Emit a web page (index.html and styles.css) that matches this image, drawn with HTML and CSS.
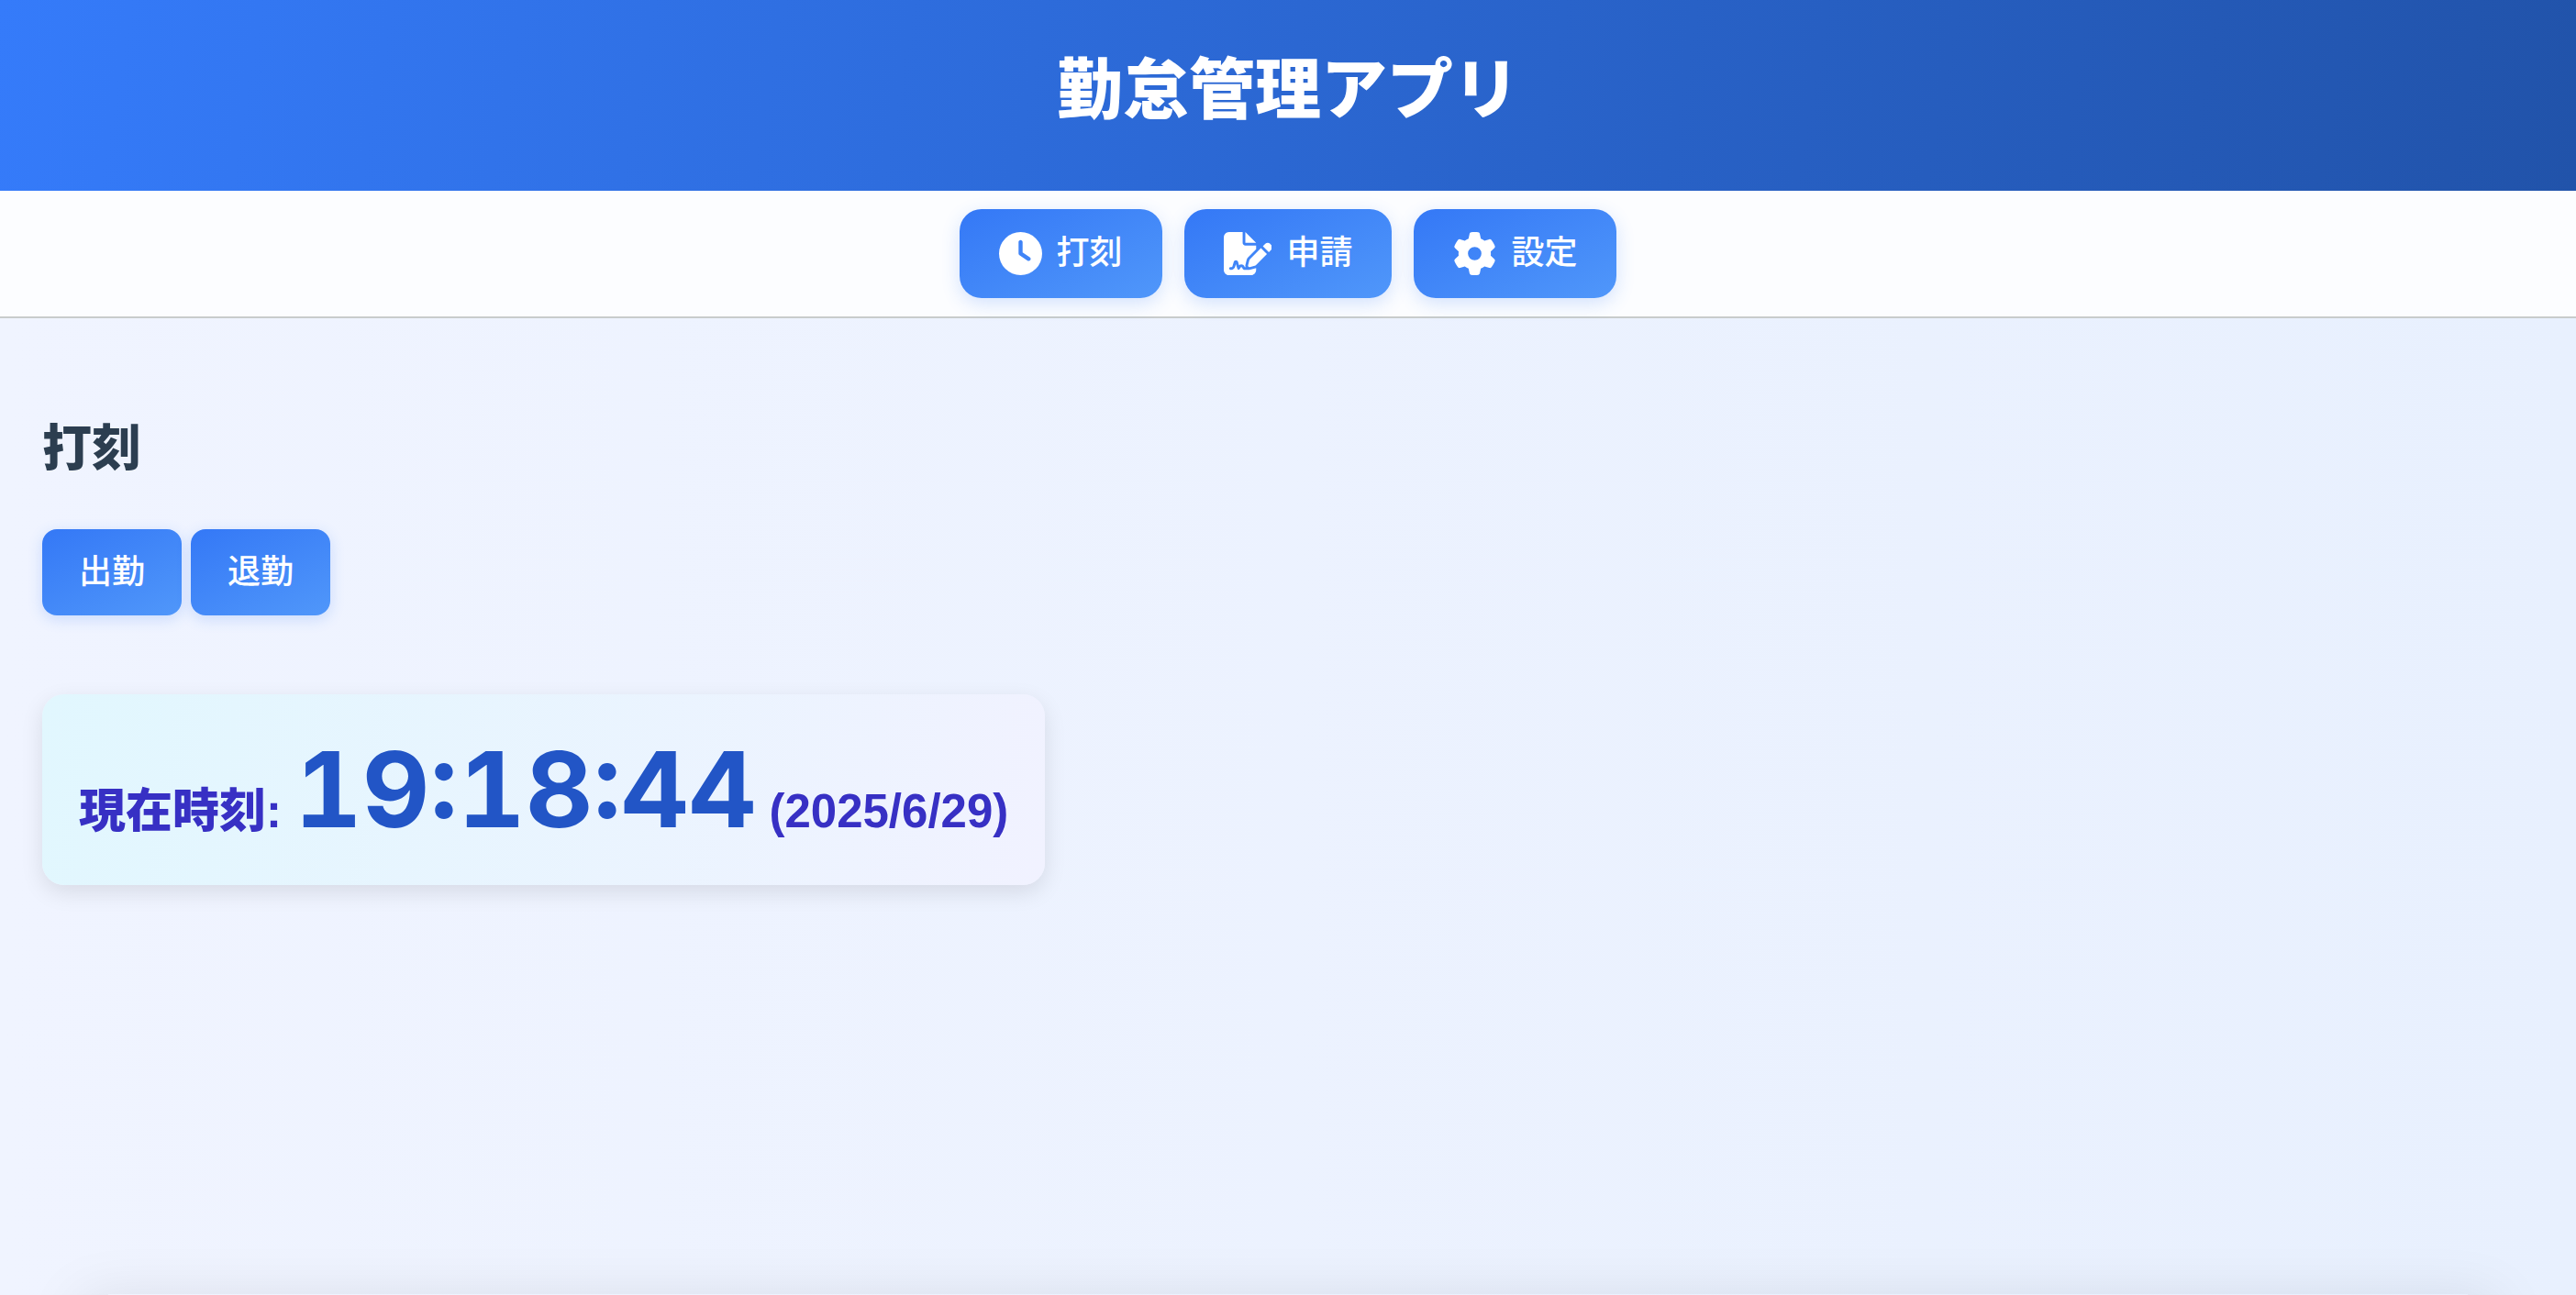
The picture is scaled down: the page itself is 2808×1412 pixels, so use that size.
FILE: index.html
```html
<!DOCTYPE html>
<html lang="ja">
<head>
<meta charset="utf-8">
<meta name="viewport" content="width=device-width, initial-scale=1">
<title>勤怠管理アプリ</title>
<link rel="stylesheet" href="styles.css">
</head>
<body>
<header class="app-header">
  <h1 class="app-title">勤怠管理アプリ</h1>
</header>
<nav class="app-nav">
  <button class="nav-button" type="button">
    <svg class="nav-icon" viewBox="0 0 512 512" aria-hidden="true"><path d="M256 0a256 256 0 1 1 0 512A256 256 0 1 1 256 0zM232 120V256c0 8 4 15.500 10.700 20l96 64c11 7.400 25.900 4.400 33.300-6.700s4.400-25.900-6.700-33.300L280 243.200V120c0-13.300-10.700-24-24-24s-24 10.700-24 24z"/></svg>
    <span>打刻</span>
  </button>
  <button class="nav-button" type="button">
    <svg class="nav-icon" viewBox="0 0 576 512" aria-hidden="true"><path d="M64 0C28.700 0 0 28.700 0 64V448c0 35.300 28.700 64 64 64H320c35.300 0 64-28.700 64-64V428.700c-2.700 1.100-5.400 2-8.200 2.700l-60.100 15c-3 .7-6 1.200-9 1.400c-.9 .1-1.800 .2-2.700 .2H240c-6.100 0-11.600-3.400-14.300-8.800l-8.800-17.700c-1.700-3.400-5.100-5.500-8.800-5.500s-7.200 2.100-8.800 5.500l-8.800 17.700c-2.900 5.900-9.200 9.400-15.700 8.800s-12.100-5.100-13.900-11.300L144 381l-9.800 32.800c-6.100 20.300-24.800 34.200-46 34.200H80c-8.800 0-16-7.200-16-16s7.200-16 16-16h8.200c7.100 0 13.300-4.600 15.300-11.400l14.900-49.500c3.400-11.300 13.800-19.100 25.600-19.100s22.200 7.700 25.600 19.100l11.600 38.600c7.400-6.200 16.800-9.700 26.800-9.700c15.900 0 30.400 9 37.500 23.200l4.400 8.800h8.900c-3.100-8.800-3.700-18.400-1.400-27.800l15-60.100c2.800-11.300 8.600-21.500 16.800-29.700L384 203.600V160H256c-17.700 0-32-14.300-32-32V0H64zM256 0V128H384L256 0zM549.800 139.700c-15.600-15.600-40.900-15.600-56.600 0l-29.400 29.400 71 71 29.400-29.400c15.600-15.600 15.600-40.900 0-56.600l-14.400-14.400zM311.900 321c-4.100 4.100-7 9.200-8.400 14.900l-15 60.100c-1.400 5.500 .2 11.200 4.200 15.200s9.700 5.600 15.200 4.200l60.100-15c5.600-1.400 10.800-4.300 14.900-8.400L512.100 262.700l-71-71L311.900 321z"/></svg>
    <span>申請</span>
  </button>
  <button class="nav-button" type="button">
    <svg class="nav-icon" viewBox="0 0 512 512" aria-hidden="true"><path d="M495.900 166.600c3.200 8.700 .5 18.400-6.400 24.600l-43.300 39.400c1.100 8.300 1.700 16.800 1.700 25.400s-.6 17.100-1.700 25.400l43.300 39.400c6.900 6.200 9.600 15.900 6.400 24.600c-4.400 11.900-9.700 23.300-15.800 34.300l-4.700 8.100c-6.600 11-14 21.400-22.100 31.200c-5.900 7.200-15.700 9.600-24.500 6.800l-55.700-17.700c-13.400 10.300-28.200 18.900-44 25.400l-12.500 57.100c-2 9.100-9 16.300-18.200 17.800c-13.800 2.300-28 3.500-42.500 3.500s-28.700-1.200-42.500-3.500c-9.200-1.500-16.200-8.700-18.200-17.800l-12.500-57.100c-15.800-6.500-30.600-15.100-44-25.400L83.100 425.900c-8.800 2.800-18.600 .3-24.500-6.800c-8.100-9.800-15.500-20.200-22.100-31.200l-4.700-8.100c-6.100-11-11.400-22.400-15.800-34.300c-3.200-8.700-.5-18.400 6.400-24.600l43.300-39.400C64.600 273.100 64 264.600 64 256s.6-17.100 1.700-25.400L22.400 191.200c-6.900-6.200-9.600-15.900-6.400-24.600c4.400-11.900 9.700-23.300 15.800-34.300l4.700-8.100c6.600-11 14-21.400 22.100-31.200c5.900-7.200 15.700-9.600 24.500-6.800l55.700 17.700c13.400-10.300 28.200-18.900 44-25.400l12.500-57.100c2-9.100 9-16.300 18.200-17.800C227.300 1.200 241.500 0 256 0s28.700 1.200 42.500 3.500c9.200 1.500 16.200 8.700 18.200 17.800l12.500 57.100c15.800 6.500 30.600 15.100 44 25.400l55.700-17.700c8.800-2.800 18.600-.3 24.500 6.800c8.100 9.800 15.500 20.200 22.100 31.200l4.700 8.100c6.100 11 11.400 22.400 15.800 34.300zM256 336a80 80 0 1 0 0-160 80 80 0 1 0 0 160z"/></svg>
    <span>設定</span>
  </button>
</nav>
<main class="app-main">
  <h2 class="section-title">打刻</h2>
  <div class="punch-actions">
    <button class="punch-button" type="button">出勤</button>
    <button class="punch-button" type="button">退勤</button>
  </div>
  <p class="clock-card">
    <span>現在時刻:</span>
    <time class="clock-time">19:18:44</time>
    <span>(2025/6/29)</span>
  </p>
  <div class="page-edge"></div>
</main>
</body>
</html>
```

FILE: styles.css
```css
* {
  box-sizing: border-box;
}

body {
  display: flex;
  flex-direction: column;
  min-height: 100vh;
  margin: 0;
  background: linear-gradient(90deg, #f0f4ff, #e8f0fe);
  color: #2c3e50;
  font-family: "Liberation Sans", "Noto Sans CJK JP", sans-serif;
  font-size: 36px;
}

button {
  border: 0;
  background: linear-gradient(155deg, #3478f6, #5097fa);
  color: #fff;
  font-family: inherit;
  font-size: 36px;
  font-weight: 500;
  line-height: 54px;
  white-space: nowrap;
  cursor: pointer;
}

.app-header {
  padding: 50px 40px 62px;
  background: linear-gradient(100deg, #357bfa, #2153aa);
  color: #fff;
  text-align: center;
}

.app-title {
  margin: 0;
  font-size: 72px;
  font-weight: 900;
  line-height: 96px;
}

.app-nav {
  display: flex;
  justify-content: center;
  gap: 24px;
  padding: 20px;
  border-bottom: 2px solid #c8cccc;
  background: #fcfdff;
}

.nav-button {
  display: flex;
  align-items: center;
  gap: 16px;
  padding: 21px 43px 22px;
  border-radius: 24px;
  box-shadow: 0 6px 20px rgba(52, 120, 246, 0.2);
}

.nav-icon {
  height: 47px;
  fill: currentColor;
}

.app-main {
  display: flex;
  flex: 1;
  flex-direction: column;
  align-items: flex-start;
  padding: 102px 46px 0;
}

.section-title {
  margin: 0;
  font-size: 54px;
  font-weight: 900;
  line-height: 80px;
}

.punch-actions {
  display: flex;
  gap: 10px;
  margin-top: 48px;
}

.punch-button {
  padding: 20px 40px;
  border-radius: 16px;
  box-shadow: 0 4px 16px rgba(52, 120, 246, 0.2);
}

.clock-card {
  display: flex;
  align-items: baseline;
  gap: 14px;
  margin: 86px 0 0;
  padding: 32px 40px;
  border-radius: 24px;
  background: linear-gradient(100deg, #e1f7fe, #f1f2ff);
  box-shadow: 0 8px 24px rgba(0, 0, 0, 0.1);
  color: #3730c4;
  font-size: 51px;
  font-weight: 900;
  line-height: 72px;
  white-space: nowrap;
}

.clock-time {
  color: #2255c6;
  font-family: Inter, sans-serif;
  font-size: 114px;
  font-weight: 700;
  font-variant-numeric: tabular-nums;
  line-height: 144px;
}

.page-edge {
  align-self: stretch;
  height: 1px;
  margin: auto 72px 0;
  box-shadow: 0 36px 64px 30px rgba(0, 0, 0, 0.1);
}
```
